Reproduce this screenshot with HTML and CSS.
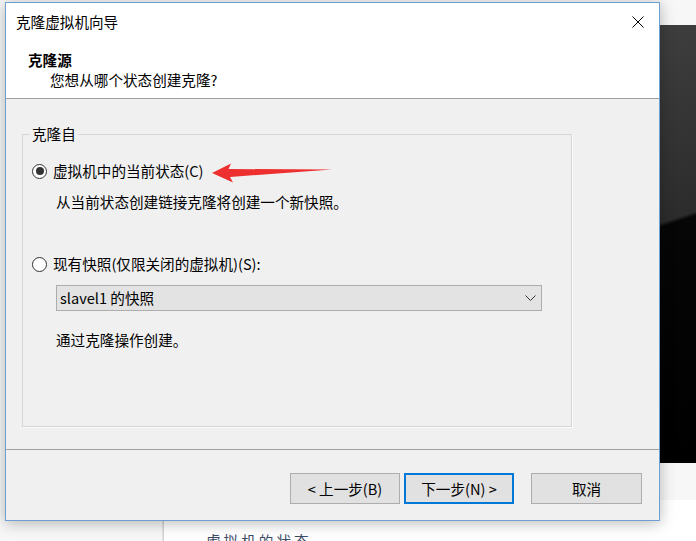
FILE: index.html
```html
<!DOCTYPE html>
<html lang="zh-CN">
<head>
<meta charset="utf-8">
<title>克隆虚拟机向导</title>
<link rel="stylesheet" href="styles.css">
</head>
<body>
<div class="desk">
  <div class="bg-dark"></div>
  <div class="bg-window"><span class="bg-text">虚拟机的状态</span></div>
  <div class="dialog">
    <div class="titlebar">
      <span class="title">克隆虚拟机向导</span>
      <svg class="close" width="12" height="12" viewBox="0 0 12 12"><path d="M0.5 0.5 L11.5 11.5 M11.5 0.5 L0.5 11.5" stroke="#000" stroke-width="1" fill="none"/></svg>
    </div>
    <div class="header">
      <div class="h-title">克隆源</div>
      <div class="h-sub">您想从哪个状态创建克隆?</div>
    </div>
    <div class="content">
      <fieldset class="group">
        <legend class="group-label">克隆自</legend>
        <div class="opt"><span class="radio checked"></span><span class="opt-text">虚拟机中的当前状态(C)</span></div>
        <div class="desc">从当前状态创建链接克隆将创建一个新快照。</div>
        <div class="opt opt2"><span class="radio"></span><span class="opt-text">现有快照(仅限关闭的虚拟机)(S):</span></div>
        <div class="combo"><span class="combo-text">slavel1 的快照</span><svg class="chev" width="11" height="6" viewBox="0 0 11 6"><path d="M0.5 0.5 L5.5 5.5 L10.5 0.5" stroke="#333" stroke-width="1" fill="none"/></svg></div>
        <div class="desc desc2">通过克隆操作创建。</div>
      </fieldset>
    </div>
    <div class="footer">
      <button class="btn">&lt; 上一步(B)</button>
      <button class="btn btn-default">下一步(N) &gt;</button>
      <button class="btn btn-cancel">取消</button>
    </div>
  </div>
  <svg class="arrow" width="696" height="541" viewBox="0 0 696 541">
    <polygon points="212,173 231,163.5 228.5,169 332,169.5 230,177 233,182.5" fill="#ee2f2f"/>
  </svg>
</div>
</body>
</html>
```
FILE: styles.css
```css
* { box-sizing: border-box; }
html, body { margin: 0; padding: 0; }
body {
  background: #ffffff;
  font-family: "Noto Sans CJK SC", "Noto Sans", sans-serif;
  font-size: 14.6px;
  color: #000;
}
.desk {
  position: relative;
  width: 696px;
  height: 541px;
  overflow: hidden;
  background: #f7f7f7;
}
.bg-dark {
  position: absolute;
  left: 660px;
  top: 25px;
  width: 36px;
  height: 438px;
  background: linear-gradient(162deg, #3e3e3e 0%, #2c2c2c 44%, #060606 45%, #000 100%);
}
.bg-window {
  position: absolute;
  left: 163px;
  top: 500px;
  width: 533px;
  height: 60px;
  border-left: 1px solid #d4d4d4;
  box-shadow: -4px 0 0 -3px #e2e2e2;
  background: #ffffff;
}
.bg-text {
  position: absolute;
  left: 42px;
  top: 31px;
  color: #3c4a66;
  line-height: 20px;
  letter-spacing: 3px;
}
.dialog {
  position: absolute;
  left: 5px;
  top: 2px;
  width: 655px;
  height: 519px;
  border: 1px solid #6f9fd1;
  background: #f0f0f0;
  box-shadow: 0 2px 14px rgba(0, 0, 0, 0.28);
  display: flex;
  flex-direction: column;
  z-index: 2;
}
.titlebar {
  height: 38px;
  flex: none;
  background: #fff;
  display: flex;
  align-items: center;
  justify-content: space-between;
  padding: 0 15px 0 10px;
}
.title { line-height: 38px; }
.close { display: block; margin-top: -1px; }
.header {
  height: 58px;
  flex: none;
  background: #fff;
  border-bottom: 1px solid #a0a0a0;
  padding: 9px 0 0 22px;
}
.h-title { font-weight: bold; line-height: 20px; }
.h-sub { line-height: 20px; padding-left: 22px; }
.content {
  flex: 1;
  padding: 26px 0 0 16px;
}
.group {
  margin: 0;
  width: 550px;
  height: 302px;
  padding: 18px 0 0 9px;
  border: 1px solid #d6d6d6;
  box-shadow: 1px 1px 0 #fcfcfc;
}
.group-label {
  padding: 0 2px;
  margin-left: -2px;
  line-height: 18px;
}
.opt {
  display: flex;
  align-items: center;
  height: 20px;
}
.opt2 { margin-top: 42px; }
.radio {
  width: 15px;
  height: 15px;
  border: 1px solid #333;
  border-radius: 50%;
  background: #fff;
  display: flex;
  align-items: center;
  justify-content: center;
  flex: none;
}
.radio.checked::after {
  content: "";
  width: 8px;
  height: 8px;
  border-radius: 50%;
  background: #333;
}
.opt-text { margin-left: 6px; line-height: 20px; }
.desc {
  margin: 11px 0 0 24px;
  line-height: 20px;
}
.desc2 { margin-top: 19px; }
.combo {
  margin: 11px 0 0 24px;
  width: 486px;
  height: 26px;
  border: 1px solid #adadad;
  background: #e3e3e3;
  display: flex;
  align-items: center;
  justify-content: space-between;
  padding: 0 5px 0 3px;
}
.combo-text { line-height: 24px; }
.chev { display: block; }
.footer {
  height: 71px;
  flex: none;
  border-top: 1px solid #a0a0a0;
  display: flex;
  align-items: flex-start;
  justify-content: flex-end;
  padding: 23px 17px 0 0;
}
.btn {
  width: 110px;
  height: 31px;
  border: 1px solid #adadad;
  background: #e1e1e1;
  font-family: "Noto Sans CJK SC", "Noto Sans", sans-serif;
  font-size: 14.6px;
  color: #000;
  padding: 0;
  line-height: 29px;
}
.btn-default {
  margin-left: 4px;
  border: 2px solid #0078d7;
  line-height: 27px;
}
.btn-cancel {
  margin-left: 17px;
  width: 111px;
}
.arrow {
  position: absolute;
  left: 0;
  top: 0;
  z-index: 3;
  pointer-events: none;
}
```
